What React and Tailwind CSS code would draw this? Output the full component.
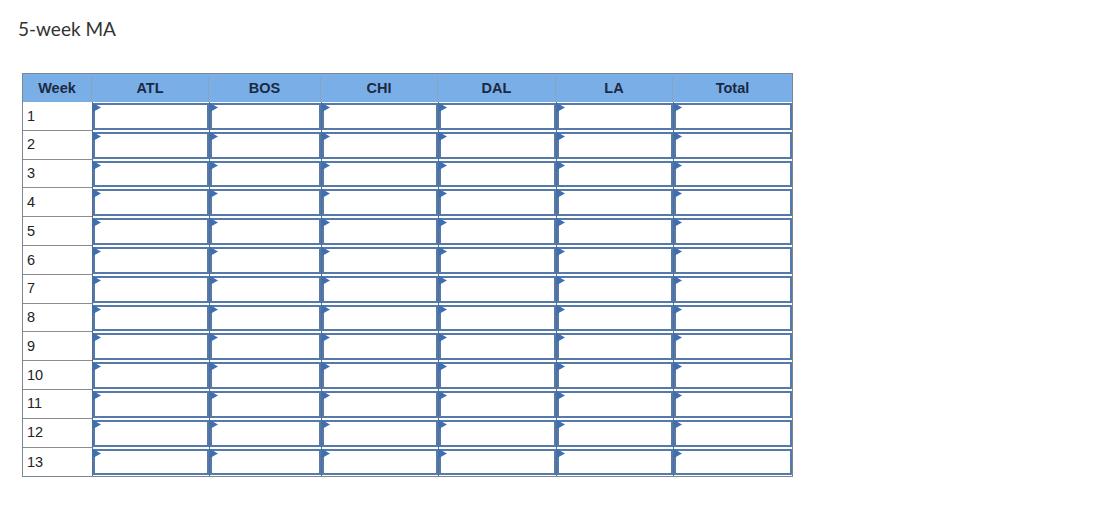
export default function App() {
  const cols = ["ATL", "BOS", "CHI", "DAL", "LA", "Total"]
  const weeks = Array.from({ length: 13 }, (_, i) => i + 1)

  return (
    <div className="w-[1100px] h-[525px] bg-white" style={{ fontFamily: "Arial, 'Liberation Sans', sans-serif" }}>
      <div className="pl-[18px] pt-[17px] text-[19px] text-[#333] leading-[24px]" style={{ fontFamily: "Lato, sans-serif" }}>
        5-week MA
      </div>

      <div className="ml-[22px] mt-[32px] w-[771px] border border-[#7d8792]">
        {/* Header */}
        <div className="grid grid-cols-[69px_117px_112px_117px_118px_117px_119px] h-[28px] pt-[2px] bg-[#7aaee6]">
          <div className="flex items-center justify-center text-[14.5px] font-bold text-[#1b2a44] border-r border-[#8aa3bf]">Week</div>
          {cols.map((c, i) => (
            <div
              key={c}
              className={`flex items-center justify-center text-[14.5px] font-bold text-[#1b2a44] ${i < cols.length - 1 ? "border-r border-[#8aa3bf]" : ""}`}
            >
              {c}
            </div>
          ))}
        </div>

        {/* Rows */}
        {weeks.map((w) => (
          <div key={w} className="grid grid-cols-[69px_117px_112px_117px_118px_117px_119px] h-[28.8px]">
            <div className={`flex items-center pl-[4px] pt-[1px] text-[14.5px] text-[#222] ${w < 13 ? "border-b border-[#8c8c8c]" : ""}`}>{w}</div>
            {cols.map((c) => (
              <div key={c} className="relative border-l border-[#4f6f99] py-[1px]">
                <div className="h-full border-2 border-[#5579a8] bg-white"></div>
                <svg className="absolute left-0 top-[1px]" width="8" height="9" viewBox="0 0 8 9">
                  <polygon points="0,0 8,4.5 0,9" fill="#3f6fb3" />
                </svg>
              </div>
            ))}
          </div>
        ))}
      </div>
    </div>
  )
}
